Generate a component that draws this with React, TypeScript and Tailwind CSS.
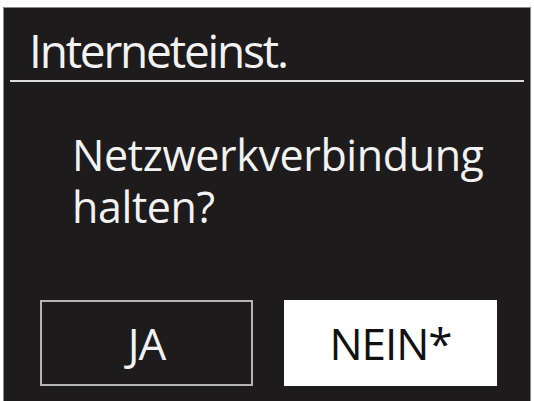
export default function App() {
  return (
    <div
      className="w-[534px] h-[401px] bg-white pt-[7px] px-[3px] overflow-hidden"
      style={{ fontFamily: '"Open Sans", "Liberation Sans", sans-serif' }}
    >
      <div className="h-full bg-[#1e1b1c] border-x border-t border-[#8c8a8a] flex flex-col text-[#f2f2f2]">
        <div className="h-[72px] flex items-end pl-[25px]">
          <h1 className="text-[46px] leading-[60px] tracking-[-2.2px]">Interneteinst.</h1>
        </div>
        <div className="mx-[6px] h-[2px] bg-[#dcdcdc]" />
        <p className="pl-[68px] pt-[47px] text-[43px] leading-[52px] tracking-[-0.4px]">
          Netzwerkverbindung
          <br />
          halten?
        </p>
        <div className="flex gap-[31px] pl-[36px] mt-auto mb-[15px]">
          <button className="w-[213px] h-[86px] border-2 border-[#b5b5b5] text-[44px] tracking-[-1px] text-[#f2f2f2]">
            JA
          </button>
          <button className="w-[213px] h-[86px] bg-white text-[44px] tracking-[-1px] text-[#111]">
            NEIN*
          </button>
        </div>
      </div>
    </div>
  )
}
